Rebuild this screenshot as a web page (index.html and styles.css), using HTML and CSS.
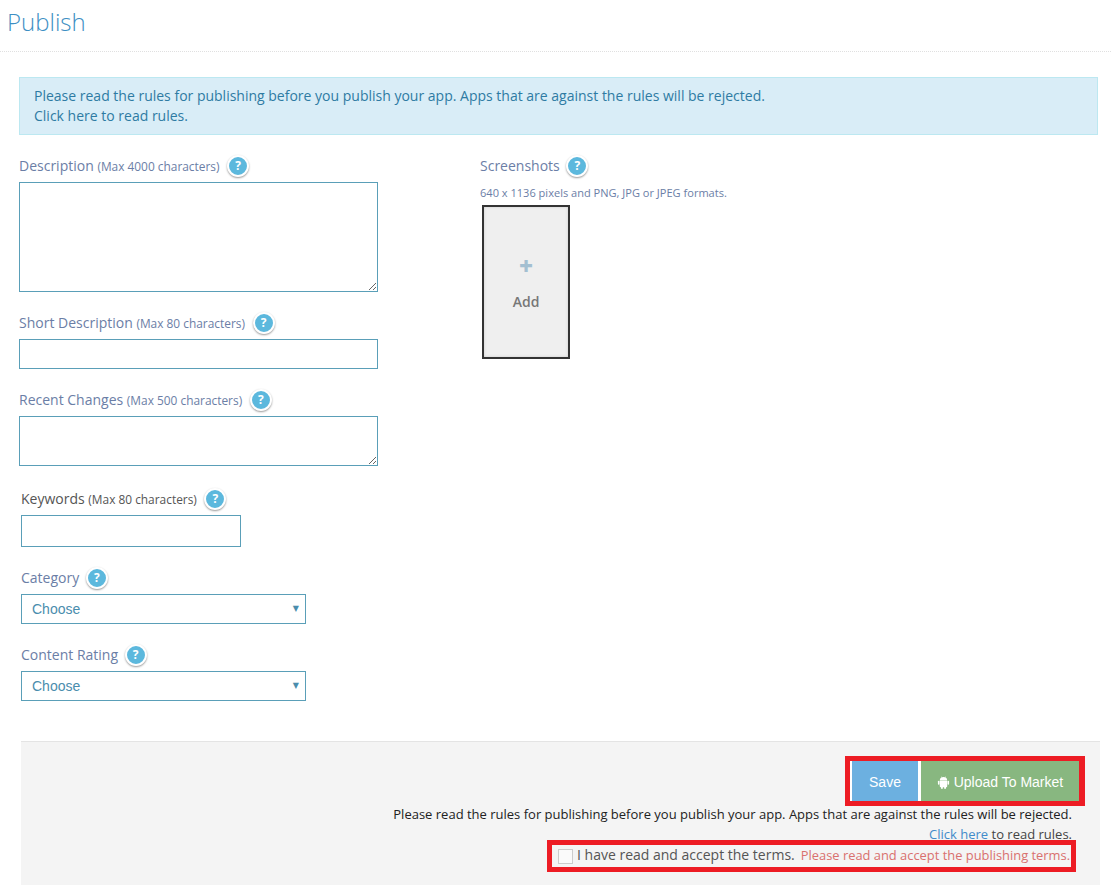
FILE: index.html
```html
<!DOCTYPE html>
<html lang="en">
	<head>
		<meta charset="utf-8">
		<title>Publish</title>
		<link rel="stylesheet" href="styles.css">
	</head>
	<body>
		<div class="page-title">
			<h1>Publish</h1>
		</div>
		<div class="content">
			<div class="alert">
				Please read the rules for publishing before you publish your app. Apps that are against the rules will be rejected.<br>
				<a href="#">Click here</a> to read rules.
			</div>
			<div class="columns">
				<div class="col-left">
					<div class="field">
						<label class="lbl">Description <small>(Max 4000 characters)</small> <span class="help">?</span></label>
						<textarea class="box desc"></textarea>
					</div>
					<div class="field">
						<label class="lbl">Short Description <small>(Max 80 characters)</small> <span class="help">?</span></label>
						<input type="text" class="box short">
					</div>
					<div class="field field-recent">
						<label class="lbl">Recent Changes <small>(Max 500 characters)</small> <span class="help">?</span></label>
						<textarea class="box recent"></textarea>
					</div>
					<div class="field inset">
						<label class="lbl dark">Keywords <small>(Max 80 characters)</small> <span class="help">?</span></label>
						<input type="text" class="box keywords">
					</div>
					<div class="field inset">
						<label class="lbl">Category <span class="help">?</span></label>
						<div class="select-wrap">
							<select class="box pick"><option>Choose</option></select>
						</div>
					</div>
					<div class="field inset">
						<label class="lbl">Content Rating <span class="help">?</span></label>
						<div class="select-wrap">
							<select class="box pick"><option>Choose</option></select>
						</div>
					</div>
				</div>
				<div class="col-right">
					<label class="lbl">Screenshots <span class="help">?</span></label>
					<p class="hint">640 x 1136 pixels and PNG, JPG or JPEG formats.</p>
					<div class="add-shot">
						<span class="plus">+</span>
						<span class="add-text">Add</span>
					</div>
				</div>
			</div>
			<div class="footer-panel">
				<div class="red-box buttons">
					<button class="btn btn-save">Save</button>
					<button class="btn btn-upload">
						<svg class="android" viewBox="0 0 14 14" width="13" height="13">
							<path fill="#fff" d="M3 4.800h8V11a1 1 0 0 1-1 1H4a1 1 0 0 1-1-1z"/>
							<path fill="#fff" d="M3 4.500C3.100 3 4 1.900 5.100 1.400L4.500.4l.3-.2.7 1.100a4 4 0 0 1 3 0L9.200.2l.3.2-.6 1C10 1.900 10.900 3 11 4.500z"/>
							<rect fill="#fff" x="1" y="5" width="1.700" height="4.500" rx=".85"/>
							<rect fill="#fff" x="11.300" y="5" width="1.700" height="4.500" rx=".85"/>
							<rect fill="#fff" x="4.300" y="11" width="2" height="3" rx="1"/>
							<rect fill="#fff" x="7.700" y="11" width="2" height="3" rx="1"/>
						</svg>
						Upload To Market
					</button>
				</div>
				<p class="rules">Please read the rules for publishing before you publish your app. Apps that are against the rules will be rejected.</p>
				<p class="rules-link"><a href="#">Click here</a> to read rules.</p>
				<div class="red-box terms">
					<span class="check"></span>
					<span class="accept">I have read and accept the terms.</span>
					<span class="error">Please read and accept the publishing terms.</span>
				</div>
			</div>
		</div>
	</body>
</html>
```

FILE: styles.css
```css
* {
	box-sizing: border-box;
}
body {
	margin: 0;
	font-family: "Open Sans", sans-serif;
	font-size: 14px;
	color: #333;
	background: #fff;
}
a {
	color: #428bca;
	text-decoration: none;
}
h1 {
	margin: 0;
	font-size: 24px;
	font-weight: 300;
	line-height: 33px;
	color: #3d8fc4;
}
p {
	margin: 0;
}
.page-title {
	height: 52px;
	padding: 5px 0 0 7px;
	border-bottom: 1px dotted #e0e0e0;
}
.content {
	padding: 25px 11px 0 19px;
}
.alert {
	height: 58px;
	margin-right: 2px;
	padding: 8px 14px;
	line-height: 20px;
	color: #2e7ba3;
	background: #d9edf7;
	border: 1px solid #bce8f1;
}
.alert a {
	color: #2e7ba3;
}
.columns {
	display: flex;
}
.col-left {
	width: 461px;
	padding-top: 20px;
}
.col-right {
	padding-top: 20px;
}
.field {
	margin-bottom: 20px;
}
.field-recent {
	margin-bottom: 22px;
}
.inset {
	margin-left: 2px;
}
.lbl {
	display: block;
	height: 22px;
	margin-bottom: 5px;
	line-height: 22px;
	color: #6b7ea6;
}
.lbl.dark {
	color: #555;
}
.lbl small {
	font-size: 11.900px;
}
.help {
	display: inline-block;
	width: 22px;
	height: 22px;
	margin: 0 0 2px 3px;
	border: 2px solid #fff;
	border-radius: 50%;
	background: #5cb8dd;
	box-shadow: 0 1px 2px #999;
	color: #fff;
	font-size: 12px;
	font-weight: 700;
	line-height: 18px;
	text-align: center;
	vertical-align: middle;
}
.lbl small + .help {
	margin-left: 4px;
}
.box {
	display: block;
	margin: 0;
	border: 1px solid #5a9fb8;
	border-radius: 0;
	background: #fff;
}
.desc {
	width: 359px;
	height: 110px;
}
.short {
	width: 359px;
	height: 30px;
}
.recent {
	width: 359px;
	height: 50px;
}
.keywords {
	width: 220px;
	height: 32px;
}
.select-wrap {
	position: relative;
	width: 285px;
}
.select-wrap::after {
	content: "\25BC";
	position: absolute;
	top: 10px;
	right: 7px;
	font-family: "DejaVu Sans", sans-serif;
	font-size: 8px;
	line-height: 9px;
	color: #4a8dad;
}
.pick {
	width: 285px;
	height: 30px;
	padding-left: 10px;
	appearance: none;
	font-family: "Liberation Sans", sans-serif;
	font-size: 14px;
	color: #4a8dad;
}
.hint {
	margin-top: 8px;
	font-size: 11.050px;
	line-height: 15px;
	color: #6b7ea6;
}
.add-shot {
	display: flex;
	flex-direction: column;
	align-items: center;
	justify-content: center;
	width: 88px;
	height: 154px;
	margin: 5px 0 0 2px;
	background: #efefef;
	border: 2px solid #333;
	box-shadow: inset 0 0 3px #ccc;
}
.plus {
	font-size: 24px;
	font-weight: 800;
	line-height: 24px;
	color: #a3bfd1;
}
.add-text {
	margin-top: 14px;
	font-weight: 600;
	color: #777;
}
.footer-panel {
	display: flex;
	flex-direction: column;
	align-items: flex-end;
	height: 144px;
	margin: 20px 0 0 2px;
	padding: 14px 15px 0 0;
	background: #f4f4f4;
	border-top: 1px solid #e4e4e4;
}
.red-box {
	display: flex;
	border: 5px solid #ed1c24;
}
.buttons {
	gap: 3px;
	padding-left: 2px;
	background: #fff;
	border-right-width: 6px;
}
.btn {
	height: 40px;
	padding-top: 3px;
	border: none;
	font-family: "Liberation Sans", sans-serif;
	font-size: 14px;
	color: #fff;
}
.btn-save {
	width: 66px;
	background: #6cb0e0;
}
.btn-upload {
	width: 158px;
	background: #88b780;
}
.android {
	vertical-align: -2px;
}
.rules {
	margin: -2px 13px 0 0;
	font-size: 13px;
	line-height: 20px;
	color: #222;
}
.rules-link {
	margin: 0 13px -4px 0;
	font-size: 13px;
	line-height: 20px;
	color: #444;
}
.terms {
	align-items: center;
	width: 529px;
	height: 32px;
	margin-right: 9px;
	padding-left: 6px;
}
.check {
	flex-shrink: 0;
	width: 15px;
	height: 15px;
	margin-right: 4px;
	background: #fafafa;
	border: 1px solid #ccc;
}
.accept {
	padding-bottom: 3px;
	font-size: 14px;
	color: #555;
	white-space: nowrap;
}
.error {
	margin-left: 6px;
	padding-bottom: 2px;
	font-size: 12.900px;
	color: #d9706e;
	white-space: nowrap;
}
```
